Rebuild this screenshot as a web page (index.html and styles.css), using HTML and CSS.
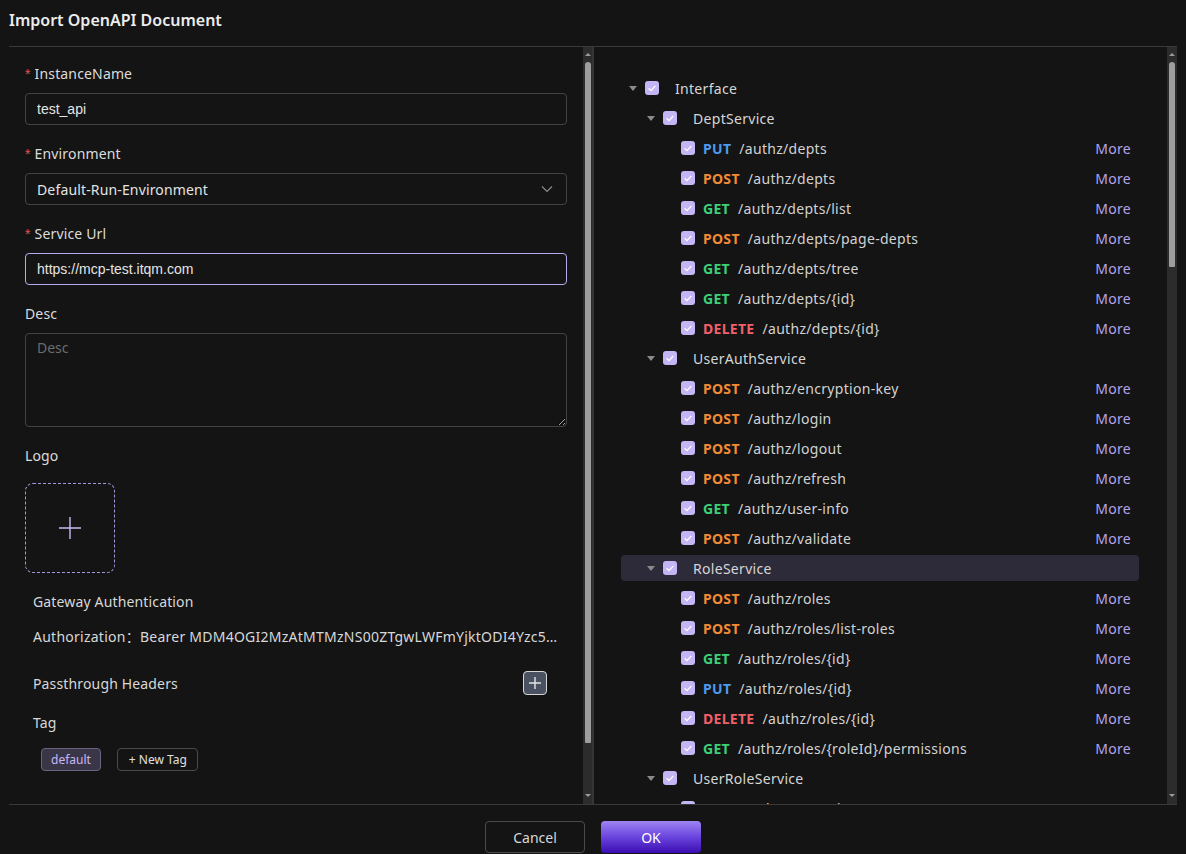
FILE: index.html
```html
<!DOCTYPE html>
<html lang="en">
<head>
<meta charset="utf-8">
<title>Import OpenAPI Document</title>
<link rel="stylesheet" href="styles.css">
</head>
<body>
<div class="modal">
  <header class="modal-header">Import OpenAPI Document</header>
  <div class="modal-body">
    <section class="pane pane-left">
      <div class="pane-content">
        <div class="form-item">
          <label class="form-label"><span class="req">*</span>InstanceName</label>
          <input class="input" type="text" value="test_api">
        </div>
        <div class="form-item">
          <label class="form-label"><span class="req">*</span>Environment</label>
          <div class="select">
            <span>Default-Run-Environment</span>
            <svg class="chev" width="12" height="8" viewBox="0 0 12 8"><path d="M1 1.5 L6 6.5 L11 1.5" fill="none" stroke="#8a8a8a" stroke-width="1.2"/></svg>
          </div>
        </div>
        <div class="form-item">
          <label class="form-label"><span class="req">*</span>Service Url</label>
          <input class="input input-focus" type="text" value="https://mcp-test.itqm.com">
        </div>
        <div class="form-item">
          <label class="form-label">Desc</label>
          <textarea class="textarea" placeholder="Desc"></textarea>
        </div>
        <div class="form-item">
          <label class="form-label">Logo</label>
          <div class="upload">
            <svg width="24" height="24" viewBox="0 0 24 24"><path d="M12 1 V23 M1 12 H23" stroke="#c9baf4" stroke-width="1.4" fill="none"/></svg>
          </div>
        </div>
        <div class="gw">
          <div class="gw-title">Gateway Authentication</div>
          <div class="gw-auth">Authorization：Bearer MDM4OGI2MzAtMTMzNS00ZTgwLWFmYjktODI4Yzc5ZTk2NGU1YjQ3</div>
          <div class="gw-row">
            <span>Passthrough Headers</span>
            <button class="icon-btn" type="button">
              <svg width="14" height="14" viewBox="0 0 14 14"><path d="M7 1 V13 M1 7 H13" stroke="#e6e6e6" stroke-width="1.4" fill="none"/></svg>
            </button>
          </div>
          <div class="gw-tag-label">Tag</div>
          <div class="tags">
            <span class="tag tag-active">default</span>
            <span class="tag tag-new">+ New Tag</span>
          </div>
        </div>
      </div>
      <div class="scrollbar">
        <span class="sb-arrow sb-up"></span>
        <div class="sb-thumb sb-thumb-left"></div>
        <span class="sb-arrow sb-down"></span>
      </div>
    </section>

    <section class="pane pane-right">
      <div class="tree">
        <div class="node lv0"><span class="switcher"><i class="caret"></i></span><i class="cb"></i><span class="name">Interface</span></div>
        <div class="node lv1"><span class="switcher"><i class="caret"></i></span><i class="cb"></i><span class="name">DeptService</span></div>
        <div class="node lv2"><span class="switcher"></span><i class="cb"></i><span class="method put">PUT</span><span class="path">/authz/depts</span><span class="more">More</span></div>
        <div class="node lv2"><span class="switcher"></span><i class="cb"></i><span class="method post">POST</span><span class="path">/authz/depts</span><span class="more">More</span></div>
        <div class="node lv2"><span class="switcher"></span><i class="cb"></i><span class="method get">GET</span><span class="path">/authz/depts/list</span><span class="more">More</span></div>
        <div class="node lv2"><span class="switcher"></span><i class="cb"></i><span class="method post">POST</span><span class="path">/authz/depts/page-depts</span><span class="more">More</span></div>
        <div class="node lv2"><span class="switcher"></span><i class="cb"></i><span class="method get">GET</span><span class="path">/authz/depts/tree</span><span class="more">More</span></div>
        <div class="node lv2"><span class="switcher"></span><i class="cb"></i><span class="method get">GET</span><span class="path">/authz/depts/{id}</span><span class="more">More</span></div>
        <div class="node lv2"><span class="switcher"></span><i class="cb"></i><span class="method delete">DELETE</span><span class="path">/authz/depts/{id}</span><span class="more">More</span></div>
        <div class="node lv1"><span class="switcher"><i class="caret"></i></span><i class="cb"></i><span class="name">UserAuthService</span></div>
        <div class="node lv2"><span class="switcher"></span><i class="cb"></i><span class="method post">POST</span><span class="path">/authz/encryption-key</span><span class="more">More</span></div>
        <div class="node lv2"><span class="switcher"></span><i class="cb"></i><span class="method post">POST</span><span class="path">/authz/login</span><span class="more">More</span></div>
        <div class="node lv2"><span class="switcher"></span><i class="cb"></i><span class="method post">POST</span><span class="path">/authz/logout</span><span class="more">More</span></div>
        <div class="node lv2"><span class="switcher"></span><i class="cb"></i><span class="method post">POST</span><span class="path">/authz/refresh</span><span class="more">More</span></div>
        <div class="node lv2"><span class="switcher"></span><i class="cb"></i><span class="method get">GET</span><span class="path">/authz/user-info</span><span class="more">More</span></div>
        <div class="node lv2"><span class="switcher"></span><i class="cb"></i><span class="method post">POST</span><span class="path">/authz/validate</span><span class="more">More</span></div>
        <div class="node lv1 active"><span class="switcher"><i class="caret"></i></span><i class="cb"></i><span class="name">RoleService</span></div>
        <div class="node lv2"><span class="switcher"></span><i class="cb"></i><span class="method post">POST</span><span class="path">/authz/roles</span><span class="more">More</span></div>
        <div class="node lv2"><span class="switcher"></span><i class="cb"></i><span class="method post">POST</span><span class="path">/authz/roles/list-roles</span><span class="more">More</span></div>
        <div class="node lv2"><span class="switcher"></span><i class="cb"></i><span class="method get">GET</span><span class="path">/authz/roles/{id}</span><span class="more">More</span></div>
        <div class="node lv2"><span class="switcher"></span><i class="cb"></i><span class="method put">PUT</span><span class="path">/authz/roles/{id}</span><span class="more">More</span></div>
        <div class="node lv2"><span class="switcher"></span><i class="cb"></i><span class="method delete">DELETE</span><span class="path">/authz/roles/{id}</span><span class="more">More</span></div>
        <div class="node lv2"><span class="switcher"></span><i class="cb"></i><span class="method get">GET</span><span class="path">/authz/roles/{roleId}/permissions</span><span class="more">More</span></div>
        <div class="node lv1"><span class="switcher"><i class="caret"></i></span><i class="cb"></i><span class="name">UserRoleService</span></div>
        <div class="node lv2"><span class="switcher"></span><i class="cb"></i><span class="method get">GET</span><span class="path">/authz/user-roles</span><span class="more">More</span></div>
      </div>
      <div class="scrollbar">
        <span class="sb-arrow sb-up"></span>
        <div class="sb-thumb sb-thumb-right"></div>
        <span class="sb-arrow sb-down"></span>
      </div>
    </section>
  </div>
  <footer class="modal-footer">
    <button class="btn btn-default" type="button">Cancel</button>
    <button class="btn btn-primary" type="button">OK</button>
  </footer>
</div>
</body>
</html>
```
FILE: styles.css
```css
* { box-sizing: border-box; }

html, body {
  margin: 0;
  padding: 0;
  background: #141414;
}

body {
  width: 1186px;
  height: 854px;
  overflow: hidden;
  font-family: "Noto Sans", "Noto Sans CJK SC", sans-serif;
  font-size: 14px;
  letter-spacing: 0.15px;
  color: #dcdcdc;
}

.modal {
  height: 854px;
  padding: 0 9px;
  display: flex;
  flex-direction: column;
}

.modal-header {
  height: 47px;
  padding-top: 9px;
  line-height: 22px;
  font-size: 16px;
  font-weight: 600;
  letter-spacing: 0;
  color: #ececec;
  border-bottom: 1px solid #3a3a3a;
}

.modal-body {
  height: 758px;
  display: flex;
  border-bottom: 1px solid #3a3a3a;
}

.pane {
  display: flex;
  height: 757px;
  overflow: hidden;
}

.pane-left {
  width: 585px;
  border-right: 2px solid #363636;
}

.pane-right {
  flex: 1;
}

.pane-content {
  flex: 1;
  padding: 16px 16px 0 16px;
  overflow: hidden;
}

/* form */
.form-item {
  margin-bottom: 18px;
}

.form-label {
  display: block;
  line-height: 22px;
  margin-bottom: 8px;
  color: #dcdcdc;
}

.req {
  color: #e0525c;
  margin-right: 4px;
  font-family: "Liberation Sans", sans-serif;
}

.input {
  display: block;
  width: 100%;
  height: 32px;
  padding: 0 11px;
  background: #141414;
  border: 1px solid #424242;
  border-radius: 4px;
  font-family: "Liberation Sans", sans-serif;
  font-size: 14px;
  letter-spacing: 0;
  color: #e4e4e4;
  outline: none;
}

.input-focus {
  border-color: #b9a8ef;
}

.select {
  display: flex;
  align-items: center;
  justify-content: space-between;
  height: 32px;
  padding: 0 13px 0 11px;
  border: 1px solid #424242;
  border-radius: 4px;
  color: #e4e4e4;
}

.textarea {
  display: block;
  width: 100%;
  height: 94px;
  padding: 3px 11px;
  background: #141414;
  border: 1px solid #424242;
  border-radius: 4px;
  font-family: "Noto Sans", sans-serif;
  font-size: 14px;
  line-height: 22px;
  color: #e4e4e4;
  resize: vertical;
  outline: none;
  color-scheme: dark;
}

.textarea::placeholder {
  color: #6c6c6c;
}

.upload {
  margin-top: 16px;
  width: 90px;
  height: 90px;
  border: 1px dashed #a597dc;
  border-radius: 8px;
  display: flex;
  align-items: center;
  justify-content: center;
}

/* gateway section */
.gw {
  padding: 0 9px 0 8px;
  color: #d8d8d8;
}

.gw-title {
  line-height: 22px;
}

.gw-auth {
  margin-top: 13px;
  line-height: 22px;
  white-space: nowrap;
  overflow: hidden;
  text-overflow: ellipsis;
  letter-spacing: 0.25px;
}

.gw-row {
  margin-top: 23px;
  margin-right: 11px;
  height: 24px;
  display: flex;
  align-items: center;
  justify-content: space-between;
}

.icon-btn {
  width: 24px;
  height: 24px;
  padding: 0;
  border: 1px solid #d6d6d6;
  border-radius: 4px;
  background: #4a5261;
  display: flex;
  align-items: center;
  justify-content: center;
}

.gw-tag-label {
  margin-top: 17px;
  line-height: 22px;
}

.tags {
  margin-top: 14px;
  padding-left: 8px;
  display: flex;
  gap: 16px;
}

.tag {
  height: 23px;
  line-height: 21px;
  padding: 0 9px;
  border: 1px solid #4a4a4a;
  border-radius: 4px;
  font-size: 12px;
  letter-spacing: 0;
  color: #e0e0e0;
}

.tag-new {
  padding: 0 10px 0 11px;
}

.tag-active {
  background: #3a3648;
  border-color: #6a6480;
  color: #c8b8f6;
}

/* scrollbars */
.scrollbar {
  width: 10px;
  height: 757px;
  background: #2c2c2c;
  display: flex;
  flex-direction: column;
  align-items: center;
}

.pane-left .scrollbar {
  width: 9px;
}

.sb-arrow {
  display: block;
  width: 0;
  height: 0;
  border-left: 3px solid transparent;
  border-right: 3px solid transparent;
}

.sb-up {
  margin-top: 6px;
  border-bottom: 3px solid #9a9a9a;
}

.sb-down {
  margin-top: auto;
  margin-bottom: 7px;
  border-top: 3px solid #9a9a9a;
}

.sb-thumb {
  width: 6px;
  margin-top: 6px;
  background: #9d9d9d;
  border-radius: 3px 3px 1px 1px;
}

.sb-thumb-left { height: 681px; }
.sb-thumb-right { height: 205px; }

/* tree */
.tree {
  flex: 1;
  padding: 28px 28px 0 27px;
  overflow: hidden;
  letter-spacing: 0.3px;
}

.node {
  display: flex;
  align-items: center;
  height: 26px;
  margin-bottom: 4px;
  padding: 0 8px 0 4px;
  border-radius: 4px;
  white-space: nowrap;
}

.node.active {
  background: #2d2a39;
}

.lv1 { padding-left: 22px; }
.lv2 { padding-left: 40px; }

.switcher {
  width: 16px;
  height: 26px;
  display: flex;
  align-items: center;
  justify-content: center;
  flex: none;
}

.caret {
  display: block;
  width: 0;
  height: 0;
  border-left: 4px solid transparent;
  border-right: 4px solid transparent;
  border-top: 5px solid #8a8a8a;
}

.cb {
  display: block;
  flex: none;
  width: 14px;
  height: 14px;
  margin-left: 4px;
  border-radius: 3px;
  background-color: #c4b5f5;
  background-image: url("data:image/svg+xml,%3Csvg xmlns='http://www.w3.org/2000/svg' width='14' height='14' viewBox='0 0 14 14'%3E%3Cpath d='M3.6 7.3 L6 9.6 L10.4 4.9' fill='none' stroke='%23ffffff' stroke-width='1.3'/%3E%3C/svg%3E");
}

.name {
  margin-left: 16px;
  color: #d6d6d6;
}

.method {
  margin-left: 8px;
  font-weight: 700;
}

.method.put { color: #4d9bef; }
.method.post { color: #f28b35; }
.method.get { color: #3ecf79; }
.method.delete { color: #f0606b; }

.path {
  margin-left: 8px;
  color: #d2d2d2;
}

.more {
  margin-left: auto;
  color: #b3a4ea;
}

/* footer */
.modal-footer {
  flex: 1;
  display: flex;
  justify-content: center;
  gap: 16px;
  padding-top: 16px;
}

.btn {
  width: 100px;
  height: 32px;
  border-radius: 4px;
  font-family: "Noto Sans", sans-serif;
  font-size: 14px;
  cursor: pointer;
}

.btn-default {
  background: transparent;
  border: 1px solid #4a4a4a;
  color: #d8d8d8;
}

.btn-primary {
  border: none;
  color: #ffffff;
  background: linear-gradient(180deg, #9e84f2 0%, #6a45de 50%, #3a0cb0 100%);
}
```
